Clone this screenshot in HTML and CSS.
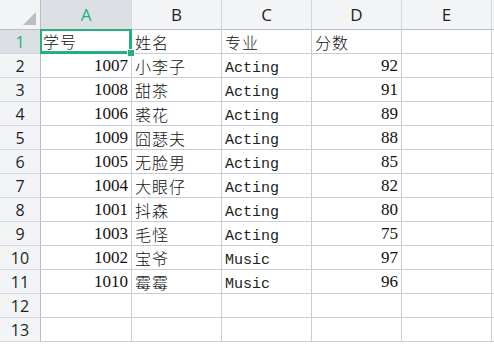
FILE: index.html
```html
<!DOCTYPE html>
<html lang="zh">
<head>
  <meta charset="UTF-8" />
  <title>Sheet</title>
  <link rel="stylesheet" href="styles.css">
</head>
<body>
  <div class="sheet">
    <!-- header row -->
    <div class="corner"><span class="tri"></span></div>
    <div class="col-head active">A</div>
    <div class="col-head">B</div>
    <div class="col-head">C</div>
    <div class="col-head">D</div>
    <div class="col-head">E</div>
    <div class="col-head blank"></div>

    <div class="row-head active">1</div>
    <div class="cell zh selected">学号<span class="handle"></span></div>
    <div class="cell zh">姓名</div>
    <div class="cell zh">专业</div>
    <div class="cell zh">分数</div>
    <div class="cell"></div>
    <div class="cell"></div>

    <div class="row-head">2</div>
    <div class="cell num">1007</div>
    <div class="cell zh">小李子</div>
    <div class="cell en">Acting</div>
    <div class="cell num">92</div>
    <div class="cell"></div>
    <div class="cell"></div>

    <div class="row-head">3</div>
    <div class="cell num">1008</div>
    <div class="cell zh">甜茶</div>
    <div class="cell en">Acting</div>
    <div class="cell num">91</div>
    <div class="cell"></div>
    <div class="cell"></div>

    <div class="row-head">4</div>
    <div class="cell num">1006</div>
    <div class="cell zh">裘花</div>
    <div class="cell en">Acting</div>
    <div class="cell num">89</div>
    <div class="cell"></div>
    <div class="cell"></div>

    <div class="row-head">5</div>
    <div class="cell num">1009</div>
    <div class="cell zh">囧瑟夫</div>
    <div class="cell en">Acting</div>
    <div class="cell num">88</div>
    <div class="cell"></div>
    <div class="cell"></div>

    <div class="row-head">6</div>
    <div class="cell num">1005</div>
    <div class="cell zh">无脸男</div>
    <div class="cell en">Acting</div>
    <div class="cell num">85</div>
    <div class="cell"></div>
    <div class="cell"></div>

    <div class="row-head">7</div>
    <div class="cell num">1004</div>
    <div class="cell zh">大眼仔</div>
    <div class="cell en">Acting</div>
    <div class="cell num">82</div>
    <div class="cell"></div>
    <div class="cell"></div>

    <div class="row-head">8</div>
    <div class="cell num">1001</div>
    <div class="cell zh">抖森</div>
    <div class="cell en">Acting</div>
    <div class="cell num">80</div>
    <div class="cell"></div>
    <div class="cell"></div>

    <div class="row-head">9</div>
    <div class="cell num">1003</div>
    <div class="cell zh">毛怪</div>
    <div class="cell en">Acting</div>
    <div class="cell num">75</div>
    <div class="cell"></div>
    <div class="cell"></div>

    <div class="row-head">10</div>
    <div class="cell num">1002</div>
    <div class="cell zh">宝爷</div>
    <div class="cell en">Music</div>
    <div class="cell num">97</div>
    <div class="cell"></div>
    <div class="cell"></div>

    <div class="row-head">11</div>
    <div class="cell num">1010</div>
    <div class="cell zh">霉霉</div>
    <div class="cell en">Music</div>
    <div class="cell num">96</div>
    <div class="cell"></div>
    <div class="cell"></div>

    <div class="row-head">12</div>
    <div class="cell"></div>
    <div class="cell"></div>
    <div class="cell"></div>
    <div class="cell"></div>
    <div class="cell"></div>
    <div class="cell"></div>

    <div class="row-head">13</div>
    <div class="cell"></div>
    <div class="cell"></div>
    <div class="cell"></div>
    <div class="cell"></div>
    <div class="cell"></div>
    <div class="cell"></div>
  </div>
</body>
</html>
```
FILE: styles.css
```css
body {
  margin: 0;
  padding: 0;
  background: #ffffff;
  overflow: hidden;
}

.sheet {
  display: grid;
  grid-template-columns: 41px 91px repeat(4, 90px) 1fr;
  grid-template-rows: 30px repeat(13, 24px);
  width: 494px;
}

.corner,
.col-head,
.row-head,
.cell {
  box-sizing: border-box;
  border-right: 1px solid #c9cdd9;
  border-bottom: 1px solid #c9cdd9;
}

.corner {
  position: relative;
  background: #f3f4f6;
  border-color: #b8bccb;
}

.tri {
  position: absolute;
  right: 4px;
  bottom: 4px;
  width: 0;
  height: 0;
  border-left: 13px solid transparent;
  border-bottom: 13px solid #bdbdbd;
}

.col-head {
  background: #f3f4f6;
  border-bottom-color: #b8bccb;
  border-right-color: #d3d6de;
  font-family: "Open Sans", "Liberation Sans", sans-serif;
  font-size: 17px;
  color: #1f1f1f;
  display: flex;
  align-items: center;
  justify-content: center;
}

.col-head.blank {
  border-right: none;
}

.row-head {
  background: #f3f4f6;
  border-right-color: #b8bccb;
  border-bottom-color: #d3d6de;
  font-family: "Open Sans", "Liberation Sans", sans-serif;
  font-size: 16px;
  color: #1f1f1f;
  display: flex;
  align-items: center;
  justify-content: center;
}

.col-head.active,
.row-head.active {
  background: #dcdfe4;
  color: #23b07c;
}

.cell {
  position: relative;
  display: flex;
  align-items: center;
  padding: 0 3px;
  color: #111;
  white-space: nowrap;
}

.zh {
  font-family: "Noto Sans CJK SC", sans-serif;
  font-size: 16px;
  font-weight: 300;
  letter-spacing: 1px;
}

.en {
  font-family: "Liberation Mono", monospace;
  font-size: 15px;
  padding-top: 5px;
  color: #222;
}

.num {
  font-family: "Liberation Serif", serif;
  font-size: 17px;
  justify-content: flex-end;
  padding-top: 1px;
}

.selected {
  margin-left: -1px;
  margin-top: -1px;
  box-shadow: inset 0 0 0 2px #23b07c;
  outline: 1px solid #23b07c;
  outline-offset: -1px;
}

.handle {
  position: absolute;
  right: -4px;
  bottom: -4px;
  width: 6px;
  height: 6px;
  background: #23b07c;
  border: 1px solid #ffffff;
  z-index: 2;
}
```
